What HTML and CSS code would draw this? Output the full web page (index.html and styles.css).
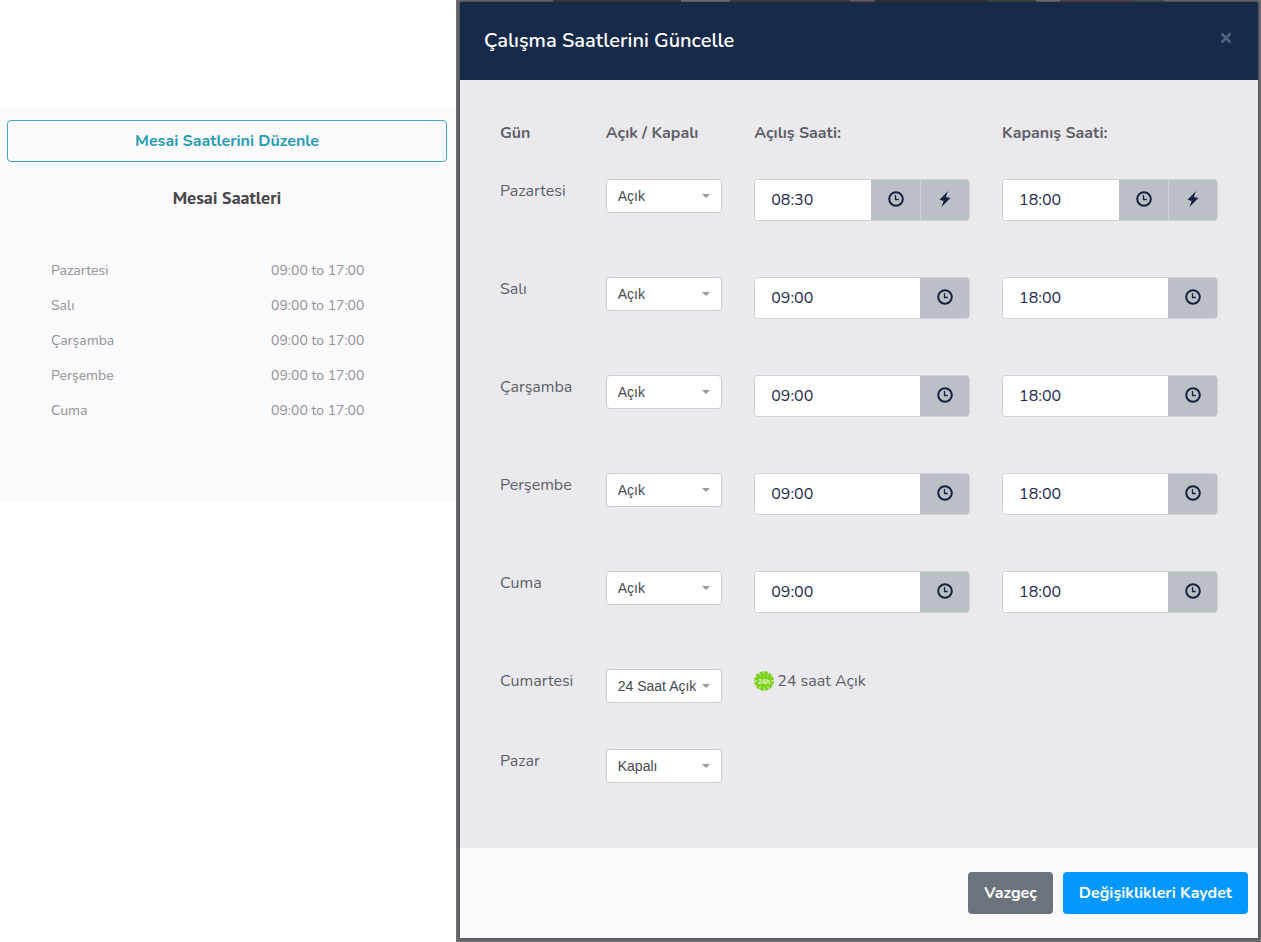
FILE: index.html
```
<!DOCTYPE html>
<html lang="tr">
<head>
<meta charset="utf-8">
<meta name="viewport" content="width=device-width, initial-scale=1">
<title>Çalışma Saatlerini Güncelle</title>
<link rel="stylesheet" href="styles.css">
</head>
<body>
<svg class="sprite" aria-hidden="true">
  <symbol id="clock" viewBox="0 0 16 16"><circle cx="8" cy="8" r="6.8" fill="none" stroke="currentColor" stroke-width="2"/><path d="M7.500 4v4.500h3.300" fill="none" stroke="currentColor" stroke-width="1.300"/></symbol>
  <symbol id="bolt" viewBox="0 0 16 16"><path d="M11 0 2.500 8.800l4.100 1.200L4.500 16l9-8.900-4.700-1.200z" fill="currentColor"/></symbol>
  <symbol id="caret" viewBox="0 0 8 4"><path d="M0 0h8L4 4z" fill="currentColor"/></symbol>
</svg>
<div class="page">
  <aside class="summary">
    <section class="panel">
      <button class="btn btn-outline" type="button">Mesai Saatlerini Düzenle</button>
      <h2 class="panel-title">Mesai Saatleri</h2>
      <table class="hours">
        <tr><th scope="row">Pazartesi</th><td>09:00 to 17:00</td></tr>
        <tr><th scope="row">Salı</th><td>09:00 to 17:00</td></tr>
        <tr><th scope="row">Çarşamba</th><td>09:00 to 17:00</td></tr>
        <tr><th scope="row">Perşembe</th><td>09:00 to 17:00</td></tr>
        <tr><th scope="row">Cuma</th><td>09:00 to 17:00</td></tr>
      </table>
    </section>
  </aside>
  <main class="backdrop">
    <form class="modal" role="dialog" aria-labelledby="modal-title">
      <header class="modal-header">
        <h1 class="modal-title" id="modal-title">Çalışma Saatlerini Güncelle</h1>
        <button class="close" type="button" aria-label="Kapat"><svg viewBox="0 0 12 12"><path d="M1.5 1.5l9 9m0-9l-9 9" fill="none" stroke="currentColor" stroke-width="2.6"/></svg></button>
      </header>
      <div class="modal-body">
        <table class="schedule">
          <thead>
            <tr><th class="col-day" scope="col">Gün</th><th class="col-state" scope="col">Açık / Kapalı</th><th scope="col">Açılış Saati:</th><th scope="col">Kapanış Saati:</th></tr>
          </thead>
          <tbody>
            <tr>
              <td><label for="d1">Pazartesi</label></td>
              <td><span class="select"><select id="d1"><option>Açık</option><option>24 Saat Açık</option><option>Kapalı</option></select><svg><use href="#caret"/></svg></span></td>
              <td><div class="time"><input type="text" value="08:30" aria-label="Pazartesi açılış"><button type="button" aria-label="Saat seç"><svg><use href="#clock"/></svg></button><button type="button" aria-label="Hepsine uygula"><svg><use href="#bolt"/></svg></button></div></td>
              <td><div class="time"><input type="text" value="18:00" aria-label="Pazartesi kapanış"><button type="button" aria-label="Saat seç"><svg><use href="#clock"/></svg></button><button type="button" aria-label="Hepsine uygula"><svg><use href="#bolt"/></svg></button></div></td>
            </tr>
            <tr>
              <td><label for="d2">Salı</label></td>
              <td><span class="select"><select id="d2"><option>Açık</option><option>24 Saat Açık</option><option>Kapalı</option></select><svg><use href="#caret"/></svg></span></td>
              <td><div class="time"><input type="text" value="09:00" aria-label="Salı açılış"><button type="button" aria-label="Saat seç"><svg><use href="#clock"/></svg></button></div></td>
              <td><div class="time"><input type="text" value="18:00" aria-label="Salı kapanış"><button type="button" aria-label="Saat seç"><svg><use href="#clock"/></svg></button></div></td>
            </tr>
            <tr>
              <td><label for="d3">Çarşamba</label></td>
              <td><span class="select"><select id="d3"><option>Açık</option><option>24 Saat Açık</option><option>Kapalı</option></select><svg><use href="#caret"/></svg></span></td>
              <td><div class="time"><input type="text" value="09:00" aria-label="Çarşamba açılış"><button type="button" aria-label="Saat seç"><svg><use href="#clock"/></svg></button></div></td>
              <td><div class="time"><input type="text" value="18:00" aria-label="Çarşamba kapanış"><button type="button" aria-label="Saat seç"><svg><use href="#clock"/></svg></button></div></td>
            </tr>
            <tr>
              <td><label for="d4">Perşembe</label></td>
              <td><span class="select"><select id="d4"><option>Açık</option><option>24 Saat Açık</option><option>Kapalı</option></select><svg><use href="#caret"/></svg></span></td>
              <td><div class="time"><input type="text" value="09:00" aria-label="Perşembe açılış"><button type="button" aria-label="Saat seç"><svg><use href="#clock"/></svg></button></div></td>
              <td><div class="time"><input type="text" value="18:00" aria-label="Perşembe kapanış"><button type="button" aria-label="Saat seç"><svg><use href="#clock"/></svg></button></div></td>
            </tr>
            <tr>
              <td><label for="d5">Cuma</label></td>
              <td><span class="select"><select id="d5"><option>Açık</option><option>24 Saat Açık</option><option>Kapalı</option></select><svg><use href="#caret"/></svg></span></td>
              <td><div class="time"><input type="text" value="09:00" aria-label="Cuma açılış"><button type="button" aria-label="Saat seç"><svg><use href="#clock"/></svg></button></div></td>
              <td><div class="time"><input type="text" value="18:00" aria-label="Cuma kapanış"><button type="button" aria-label="Saat seç"><svg><use href="#clock"/></svg></button></div></td>
            </tr>
            <tr class="compact">
              <td><label for="d6">Cumartesi</label></td>
              <td><span class="select"><select id="d6"><option>Açık</option><option selected>24 Saat Açık</option><option>Kapalı</option></select><svg><use href="#caret"/></svg></span></td>
              <td><span class="allday"><svg class="badge" viewBox="0 0 20 20" aria-hidden="true"><circle cx="10" cy="10" r="8.8" fill="#7ed321"/><circle cx="10" cy="10" r="9" fill="none" stroke="#7ed321" stroke-width="1.8" stroke-dasharray="3.5 1.21"/><path d="M1 10h2m14 0h2M10 1.5v2m0 13v2M5.5 3l1 1.6M14.500 3l-1 1.6M5.500 17l1-1.600M14.500 17l-1-1.600" stroke="#e8f8d4" stroke-width=".8"/><text x="10" y="12.500" text-anchor="middle" font-size="7" font-weight="700" fill="#e8f8d4">24h</text></svg>24 saat Açık</span></td>
              <td></td>
            </tr>
            <tr class="compact">
              <td><label for="d7">Pazar</label></td>
              <td><span class="select"><select id="d7"><option>Açık</option><option>24 Saat Açık</option><option selected>Kapalı</option></select><svg><use href="#caret"/></svg></span></td>
              <td></td>
              <td></td>
            </tr>
          </tbody>
        </table>
      </div>
      <footer class="modal-footer">
        <button class="btn btn-secondary" type="button">Vazgeç</button>
        <button class="btn btn-primary" type="submit">Değişiklikleri Kaydet</button>
      </footer>
    </form>
  </main>
</div>
</body>
</html>
```
FILE: styles.css
```
* { box-sizing: border-box; }
body {
  margin: 0;
  background: #fff;
  color: #5f5f66;
  font: 16px/24px Nunito, Lato, "Open Sans", sans-serif;
}
button, input { font: inherit; }
.sprite { display: none; }
.page {
  display: grid;
  grid-template-columns: 456fr 805fr;
  min-height: 100vh;
}
.summary { padding-top: 108px; }
.panel {
  padding: 12px 9px 74px 7px;
  background: #faf9fc;
}
.btn {
  height: 42px;
  padding: 0 15px;
  border: 1px solid transparent;
  border-radius: 4px;
  color: #fff;
  font-weight: 700;
}
.btn-outline {
  width: 100%;
  border-color: #41a6ba;
  background: transparent;
  color: #269cb1;
}
.panel-title {
  margin: 24px 0 43px;
  color: #48484a;
  font: 700 18px/24px "PT Sans", "Open Sans", sans-serif;
  text-align: center;
}
.hours {
  width: 100%;
  border-collapse: collapse;
  table-layout: fixed;
  color: #929297;
  font-size: 14px;
  line-height: 35px;
}
.hours th, .hours td {
  padding: 0 0 0 44px;
  font-weight: 400;
  text-align: left;
}
.backdrop {
  padding: 2px 3px 4px 4px;
  background:
    linear-gradient(90deg, transparent 12%, #3b3937 12% 28%, #77777b 28% 34%, #46403b 34% 49%, #6b625c 49% 52%, #302f2d 52% 66%, #3c4838 66% 72%, #77777b 72% 75%, #5a4445 75% 84%, #4d5257 84% 88%, transparent 88%) 0 0 / 100% 2px no-repeat,
    #6d6d71;
}
.modal {
  background: #faf9fc;
  box-shadow: 0 0 3px #2c2c30;
}
.modal-header {
  display: flex;
  align-items: flex-start;
  justify-content: space-between;
  height: 78px;
  padding: 24px;
  background: #172a4a;
}
.modal-title {
  margin: 0;
  color: #fff;
  font-size: 20px;
  font-weight: 600;
  line-height: 30px;
}
.close {
  display: grid;
  place-items: center;
  width: 16px;
  height: 24px;
  padding: 0;
  border: 0;
  background: none;
  color: #52627c;
}
.close svg { width: 12px; height: 12px; }
.modal-body {
  padding: 25px 24px 35px;
  background: #e9e9ee;
}
.schedule {
  width: 100%;
  border-collapse: collapse;
  table-layout: fixed;
}
.schedule th, .schedule td {
  height: 98px;
  padding: 16px;
  text-align: left;
  vertical-align: top;
}
.schedule th { height: 58px; font-weight: 700; white-space: nowrap; }
.schedule .compact td { height: 80px; }
.col-day { width: 14.100%; }
.col-state { width: 19.800%; }
.schedule label, .allday { display: flex; align-items: center; }
.select { display: grid; }
.select select, .select svg { grid-area: 1 / 1; }
.select select {
  width: 100%;
  height: 34px;
  padding: 0 11px;
  border: 1px solid #cbcbd2;
  border-radius: 4px;
  background: #fff;
  color: #49494f;
  font: 14px/20px "Helvetica Neue", "Liberation Sans", sans-serif;
  appearance: none;
}
.select svg {
  place-self: center end;
  width: 8px;
  height: 4px;
  margin-right: 12px;
  color: #97979c;
  pointer-events: none;
}
.time {
  display: flex;
  height: 42px;
  overflow: hidden;
  border: 1px solid #d0d1d7;
  border-radius: 4px;
}
.time input {
  flex: 1;
  min-width: 0;
  padding: 0 16px;
  border: 0;
  background: #fff;
  color: #1b294b;
}
.time button {
  display: grid;
  place-items: center;
  flex: 0 0 49px;
  padding: 0 0 2px;
  border: 0;
  background: #bbc0c7;
  color: #15233f;
}
.time button + button { border-left: 1px solid #cdd1d6; }
.time svg { width: 16px; height: 16px; }
.allday { gap: 3px; }
.badge { width: 20px; height: 20px; font-family: "Liberation Sans", sans-serif; }
.modal-footer {
  display: flex;
  justify-content: flex-end;
  gap: 10px;
  padding: 24px 10px;
}
.btn-secondary { background: #6c737c; }
.btn-primary { background: #0398ff; }
```
